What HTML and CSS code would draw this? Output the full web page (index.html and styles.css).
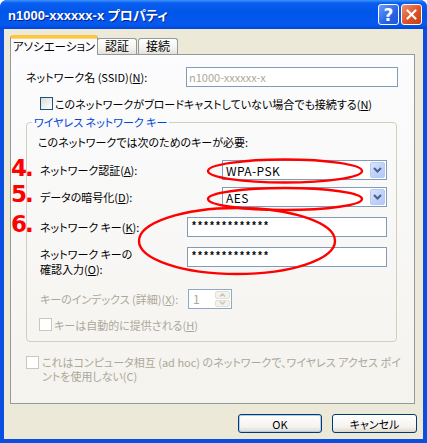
FILE: index.html
```html
<!DOCTYPE html>
<html lang="ja">
<head>
  <meta charset="UTF-8" />
  <title>n1000-xxxxxx-x プロパティ</title>
  <link rel="stylesheet" href="styles.css">
</head>
<body>

  <div class="window">
    <div class="titlebar">
      <span class="title">n1000-xxxxxx-x プロパティ</span>
      <span class="cap cap-help">?</span>
      <span class="cap cap-close">
        <svg width="13" height="13" viewBox="0 0 13 13"><path d="M2.5 2.5 L10.5 10.5 M10.5 2.5 L2.5 10.5" stroke="#fff" stroke-width="2.2" stroke-linecap="round"/></svg>
      </span>
    </div>

    <div class="client">
      <div class="tabs">
        <div class="tab active">アソシエーション</div>
        <div class="tab t2">認証</div>
        <div class="tab t3">接続</div>
      </div>

      <div class="panel">
        <div class="ssid-row">
          <span class="ssid-label">ネットワーク名 (SSID)(<u>N</u>):</span>
          <div class="field ssid-field">n1000-xxxxxx-x</div>
        </div>

        <div class="check-row hidden-net">
          <span class="check"></span>
          <span>このネットワークがブロードキャストしていない場合でも接続する(<u>N</u>)</span>
        </div>

        <fieldset class="group">
          <legend>ワイヤレス ネットワーク キー</legend>
          <div class="intro">このネットワークでは次のためのキーが必要:</div>

          <div class="row r-auth">
            <span class="lbl">ネットワーク認証(<u>A</u>):</span>
            <div class="combo"><span class="combo-text">WPA-PSK</span><span class="drop"><svg width="9" height="6" viewBox="0 0 9 6"><path d="M1 1 L4.5 4.5 L8 1" fill="none" stroke="#4D6185" stroke-width="2"/></svg></span></div>
          </div>

          <div class="row r-enc">
            <span class="lbl">データの暗号化(<u>D</u>):</span>
            <div class="combo"><span class="combo-text">AES</span><span class="drop"><svg width="9" height="6" viewBox="0 0 9 6"><path d="M1 1 L4.5 4.5 L8 1" fill="none" stroke="#4D6185" stroke-width="2"/></svg></span></div>
          </div>

          <div class="row r-key">
            <span class="lbl">ネットワーク キー(<u>K</u>):</span>
            <div class="field key-field">*************</div>
          </div>

          <div class="row r-confirm">
            <span class="lbl two-line">ネットワーク キーの<br>確認入力(<u>O</u>):</span>
            <div class="field key-field">*************</div>
          </div>

          <div class="row r-index">
            <span class="lbl gray">キーのインデックス (詳細)(<u>X</u>):</span>
            <div class="spin">
              <span class="spin-text">1</span>
              <span class="spin-btns">
                <span class="spin-btn"><svg width="7" height="4" viewBox="0 0 7 4"><path d="M1 3.5 L3.5 1 L6 3.5" fill="none" stroke="#C9C7BA" stroke-width="1.5"/></svg></span>
                <span class="spin-btn"><svg width="7" height="4" viewBox="0 0 7 4"><path d="M1 0.5 L3.5 3 L6 0.5" fill="none" stroke="#C9C7BA" stroke-width="1.5"/></svg></span>
              </span>
            </div>
          </div>

          <div class="check-row auto-key gray">
            <span class="check off"></span>
            <span>キーは自動的に提供される(<u>H</u>)</span>
          </div>
        </fieldset>

        <div class="check-row adhoc gray">
          <span class="check off"></span>
          <span class="adhoc-text">これはコンピュータ相互 (ad hoc) のネットワークで、ワイヤレス アクセス ポイ<br>ントを使用しない(C)</span>
        </div>
      </div>

      <div class="buttons">
        <button class="btn default">OK</button>
        <button class="btn">キャンセル</button>
      </div>
    </div>

    <!-- red annotations drawn over the dialog -->
    <svg class="marks" width="427" height="443" viewBox="0 0 427 443">
      <ellipse cx="285" cy="171" rx="77" ry="11.5" />
      <ellipse cx="285" cy="199" rx="77" ry="11" />
      <ellipse cx="237" cy="241" rx="98" ry="33" />
    </svg>
    <div class="num num4">4.</div>
    <div class="num num5">5.</div>
    <div class="num num6">6.</div>
  </div>

</body>
</html>
```

FILE: styles.css
```css
:root {
  --frame: #0B4FE2;
  --face: #ECE9D8;
  --tab-border: #919B9C;
  --field-border: #7F9DB9;
  --gray-text: #ACA899;
  --red: #FF0000;
}

* {
  box-sizing: border-box;
}

body {
  margin: 0;
  background: #fff;
  font-family: "Noto Sans CJK JP", "Noto Sans", sans-serif;
  font-size: 11px;
  font-feature-settings: "palt";
  color: #000;
}

u {
  text-decoration-thickness: 1px;
  text-underline-offset: 1px;
}

.window {
  position: relative;
  width: 427px;
  height: 443px;
  background: var(--frame);
  border-radius: 7px 7px 0 0;
  display: flex;
  flex-direction: column;
  overflow: hidden;
}

.titlebar {
  height: 29px;
  display: flex;
  align-items: center;
  padding: 0 5px 0 8px;
  background: linear-gradient(#3D95FF 0%, #0A5FF0 10%, #0055EA 45%, #0559EE 85%, #0046D8 100%);
}

.title {
  flex: 1;
  color: #fff;
  font-family: "Liberation Sans", "Noto Sans CJK JP", sans-serif;
  font-weight: bold;
  font-size: 13px;
  text-shadow: 1px 1px #0A1E8A;
}

.cap {
  width: 21px;
  height: 21px;
  border: 1px solid #fff;
  border-radius: 3px;
  display: flex;
  align-items: center;
  justify-content: center;
}

.cap-help {
  margin-right: 2px;
  background: linear-gradient(135deg, #6C9DFB, #2763E6 60%, #1F55D8);
  color: #fff;
  font: bold 17px "DejaVu Sans", sans-serif;
}

.cap-close {
  background: linear-gradient(135deg, #EE9170, #DD5228 55%, #C53F14);
}

.client {
  flex: 1;
  margin: 0 4px 4px;
  background: var(--face);
  padding: 6px 8px 0 6px;
  display: flex;
  flex-direction: column;
}

.tabs {
  display: flex;
  align-items: flex-start;
  height: 20px;
  margin-bottom: -1px;
  position: relative;
  z-index: 1;
}

.tab {
  height: 16px;
  margin-top: 3px;
  border: 1px solid var(--tab-border);
  border-bottom: none;
  border-radius: 3px 3px 0 0;
  background: linear-gradient(#FFFFFF, #F3F2EE 60%, #E3E1D9);
  font-size: 12px;
  line-height: 14px;
  text-align: center;
}

.tab.active {
  width: 88px;
  height: 20px;
  margin-top: 0;
  border-top: 3px solid #FFC53C;
  box-shadow: inset 0 1px 0 #FBD780;
  background: #FCFCFE;
  font-size: 11.5px;
  line-height: 16px;
}

.tab.t2 {
  width: 40px;
  margin-left: -1px;
}

.tab.t3 {
  width: 40px;
  margin-left: 1px;
}

.panel {
  height: 350px;
  border: 1px solid var(--tab-border);
  background: linear-gradient(#FCFCFE, #F4F3EE);
}

.field {
  height: 20px;
  border: 1px solid var(--field-border);
  background: #fff;
  padding-left: 2px;
  line-height: 18px;
  white-space: nowrap;
}

.ssid-row {
  display: flex;
  align-items: center;
  margin-top: 12px;
  padding-left: 15px;
}

.ssid-label {
  width: 160px;
}

.ssid-field {
  width: 212px;
  color: var(--gray-text);
}

.check-row {
  display: flex;
  align-items: center;
  height: 13px;
  white-space: nowrap;
}

.check {
  width: 13px;
  height: 13px;
  margin-right: 2px;
  border: 1px solid #1C5180;
  background: linear-gradient(135deg, #DCDBD5, #F6F6F3 70%, #FFFFFF);
  flex-shrink: 0;
}

.check.off {
  border-color: #CAC8BB;
  background: #fff;
}

.hidden-net {
  margin-top: 10px;
  padding-left: 29px;
}

.group {
  width: 371px;
  margin: 5px 0 0 15px;
  padding: 0 9px 10px 11px;
  border: 1px solid #D0D0BF;
  border-radius: 4px;
  min-width: 0;
}

.group legend {
  margin-left: -6px;
  padding: 0 2px;
  color: #0046D5;
  line-height: 14px;
}

.intro {
  margin-top: 6px;
  line-height: 14px;
}

.row {
  display: flex;
  align-items: center;
  padding-left: 2px;
  white-space: nowrap;
}

.lbl {
  width: 146px;
}

.gray {
  color: var(--gray-text);
}

.r-auth { margin-top: 11px; }
.r-enc { margin-top: 7px; }
.r-key { margin-top: 10px; }
.r-confirm { margin-top: 10px; align-items: flex-start; }
.r-index { margin-top: 12px; }

.two-line {
  line-height: 15px;
}

.combo {
  width: 165px;
  height: 20px;
  margin-left: auto;
  border: 1px solid var(--field-border);
  background: #fff;
  display: flex;
  align-items: center;
  padding: 1px;
}

.combo-text {
  flex: 1;
  padding-left: 2px;
  font-size: 12px;
  letter-spacing: 0.4px;
}

.drop {
  width: 15px;
  height: 16px;
  border: 1px solid #B5C9F7;
  border-radius: 2px;
  background: linear-gradient(135deg, #DCE6FD, #C1D3FB 50%, #B3C8F6);
  display: flex;
  align-items: center;
  justify-content: center;
}

.key-field {
  width: 200px;
  margin-left: auto;
  font: bold 10px/18px "Liberation Mono", monospace;
  padding-left: 3px;
}

.spin {
  width: 44px;
  height: 20px;
  margin-left: 2px;
  border: 1px solid #8FA8C4;
  background: #fff;
  display: flex;
  padding: 1px;
}

.spin-text {
  flex: 1;
  padding-left: 3px;
  color: var(--gray-text);
  font-size: 12px;
  line-height: 16px;
}

.spin-btns {
  width: 15px;
  display: flex;
  flex-direction: column;
  gap: 1px;
}

.spin-btn {
  flex: 1;
  border: 1px solid #E2E0D6;
  border-radius: 2px;
  background: #F3F2EC;
  display: flex;
  align-items: center;
  justify-content: center;
}

.auto-key {
  margin-top: 9px;
  padding-left: 1px;
}

.adhoc {
  height: auto;
  margin-top: 14px;
  padding-left: 15px;
  align-items: flex-start;
}

.adhoc .check {
  margin-right: 3px;
}

.adhoc-text {
  margin-top: -1px;
  line-height: 14px;
}

.buttons {
  display: flex;
  justify-content: flex-end;
  gap: 10px;
  margin: 10px -2px 0 0;
}

.btn {
  width: 85px;
  height: 19px;
  padding: 0;
  border: 1px solid #003C74;
  border-radius: 3px;
  background: linear-gradient(#FFFFFF, #F4F3EE 70%, #DCD7CB);
  font-family: inherit;
  font-size: 11px;
  font-feature-settings: "palt";
  line-height: 16px;
  color: #000;
}

.btn.default {
  width: 84px;
  box-shadow: inset 0 0 0 1px #B3CBF0;
}

.marks {
  position: absolute;
  top: 0;
  left: 0;
  pointer-events: none;
}

.marks ellipse {
  fill: none;
  stroke: var(--red);
  stroke-width: 2.4;
}

.num {
  position: absolute;
  left: 11px;
  color: var(--red);
  font: bold 23px/23px "DejaVu Sans", sans-serif;
  letter-spacing: -2px;
}

.num4 { top: 157px; }
.num5 { top: 183px; }
.num6 { top: 213px; }
```
